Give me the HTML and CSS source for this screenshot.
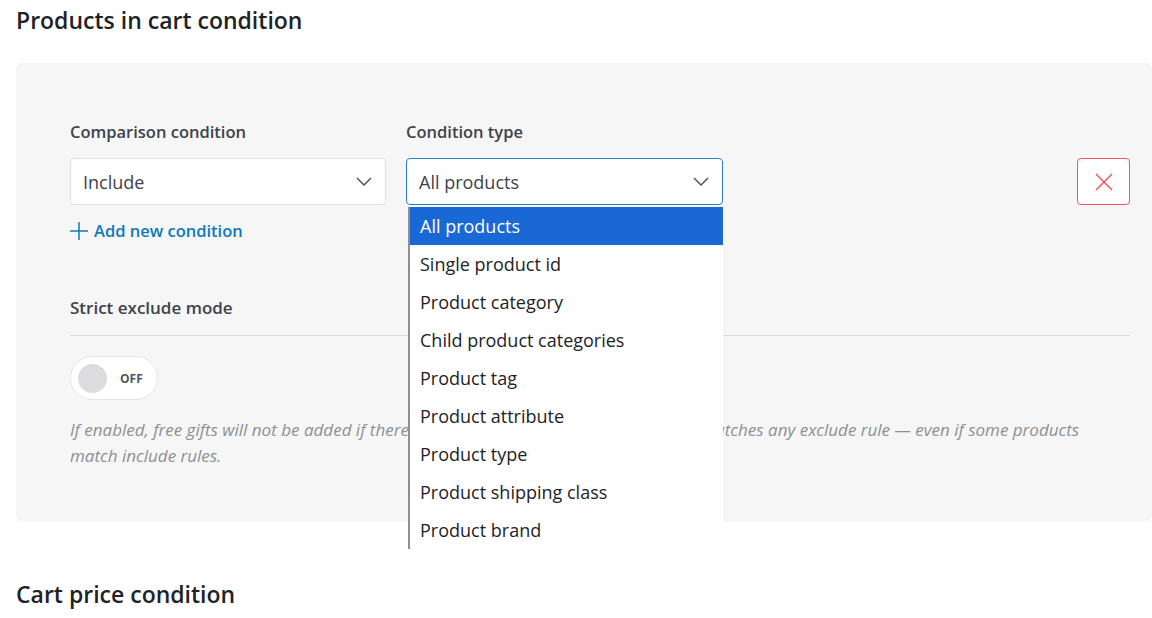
FILE: index.html
```html
<!DOCTYPE html>
<html lang="en">
  <head>
    <meta charset="UTF-8" />
    <meta name="viewport" content="width=device-width, initial-scale=1.0" />
    <title>Products in cart condition</title>
    <link rel="stylesheet" href="styles.css">
  </head>
  <body>
    <h2 class="section-title">Products in cart condition</h2>

    <div class="panel">
      <div class="condition-row">
        <div class="field field-compare">
          <label class="field-label">Comparison condition</label>
          <div class="select">
            <span>Include</span>
            <svg class="chevron" viewBox="0 0 16 9" width="16" height="9">
              <path d="M1 1l7 7 7-7" fill="none" stroke="#50575e" stroke-width="1.5" />
            </svg>
          </div>
        </div>

        <div class="field field-type">
          <label class="field-label">Condition type</label>
          <div class="select select-open">
            <span>All products</span>
            <svg class="chevron" viewBox="0 0 16 9" width="16" height="9">
              <path d="M1 1l7 7 7-7" fill="none" stroke="#50575e" stroke-width="1.5" />
            </svg>

            <ul class="dropdown">
              <li class="active">All products</li>
              <li>Single product id</li>
              <li>Product category</li>
              <li>Child product categories</li>
              <li>Product tag</li>
              <li>Product attribute</li>
              <li>Product type</li>
              <li>Product shipping class</li>
              <li>Product brand</li>
            </ul>
          </div>
        </div>

        <button class="remove-btn" aria-label="Remove">
          <svg viewBox="0 0 18 18" width="18" height="18">
            <path d="M1 1l16 16M17 1L1 17" fill="none" stroke="#f0565a" stroke-width="1.5" />
          </svg>
        </button>
      </div>

      <a class="add-link" href="#">
        <svg viewBox="0 0 18 18" width="18" height="18">
          <path d="M9 0v18M0 9h18" fill="none" stroke="#1078bd" stroke-width="1.5" />
        </svg>
        Add new condition
      </a>

      <div class="strict">
        <div class="strict-title">Strict exclude mode</div>
        <div class="toggle">
          <span class="knob"></span>
          <span class="toggle-text">OFF</span>
        </div>
        <p class="help">
          If enabled, free gifts will not be added if there is at least one product in the cart that matches any exclude rule — even if some products
          match include rules.
        </p>
      </div>
    </div>

    <h2 class="section-title section-next">Cart price condition</h2>
  </body>
</html>
```

FILE: styles.css
```css
body {
  font-family: "Segoe UI", "Open Sans", sans-serif;
  margin: 0;
  padding: 0 0 0 16px;
  overflow: hidden;
  background: #fff;
  color: #1d2327;
}

.section-title {
  font-size: 23px;
  font-weight: 600;
  line-height: 40px;
  margin: 0;
  color: #1d2327;
}

.section-next {
  margin-top: 52px;
}

/* Grey box holding the condition rows */
.panel {
  margin-top: 23px;
  width: 1136px;
  box-sizing: border-box;
  padding: 58px 22px 53px 54px;
  background: #f6f6f6;
  border-radius: 6px;
}

.condition-row {
  display: flex;
  align-items: flex-end;
  gap: 20px;
}

.field {
  display: flex;
  flex-direction: column;
}

.field-compare {
  width: 316px;
}

.field-type {
  width: 317px;
}

.field-label {
  font-size: 16.5px;
  font-weight: 600;
  line-height: 22px;
  margin-bottom: 15px;
  color: #3c434a;
}

.select {
  position: relative;
  height: 47px;
  box-sizing: border-box;
  display: flex;
  align-items: center;
  justify-content: space-between;
  padding: 0 12px;
  background: #fff;
  border: 1px solid #e0e0e0;
  border-radius: 4px;
  font-size: 18px;
  color: #3c434a;
}

.select-open {
  border-color: #2c7fc4;
}

.chevron {
  margin-right: 1px;
}

/* Open option list of the condition type select */
.dropdown {
  position: absolute;
  top: 48px;
  left: 1px;
  width: 315px;
  box-sizing: border-box;
  margin: 0;
  padding: 0;
  list-style: none;
  background: #fff;
  border-left: 2px solid #8c8f94;
  z-index: 5;
}

.dropdown li {
  height: 38px;
  line-height: 38px;
  padding-left: 10px;
  font-size: 18px;
  color: #1d2327;
}

.dropdown li.active {
  background: #1a68d6;
  color: #fff;
}

.remove-btn {
  margin-left: auto;
  width: 53px;
  height: 47px;
  display: flex;
  align-items: center;
  justify-content: center;
  background: #fff;
  border: 1px solid #f0565a;
  border-radius: 4px;
  padding: 0;
  cursor: pointer;
}

.add-link {
  display: inline-flex;
  align-items: center;
  gap: 6px;
  margin-top: 14px;
  line-height: 24px;
  font-size: 16.5px;
  font-weight: 600;
  color: #1078bd;
  text-decoration: none;
}

.strict {
  margin-top: 52px;
}

.strict-title {
  font-size: 17px;
  font-weight: 600;
  line-height: 22px;
  padding-bottom: 16px;
  border-bottom: 1px solid #dcdcde;
  color: #3c434a;
}

.toggle {
  margin-top: 20px;
  width: 88px;
  height: 44px;
  box-sizing: border-box;
  display: flex;
  align-items: center;
  padding-left: 7px;
  background: #fff;
  border: 1px solid #e6e6e6;
  border-radius: 22px;
}

.knob {
  width: 29px;
  height: 29px;
  border-radius: 50%;
  background: #dcdcde;
}

.toggle-text {
  margin-left: 13px;
  font-size: 12px;
  font-weight: 700;
  color: #50575e;
}

.help {
  margin: 17px 0 0;
  max-width: 1030px;
  font-size: 17px;
  font-style: italic;
  line-height: 26px;
  color: #8c8f94;
}
```
